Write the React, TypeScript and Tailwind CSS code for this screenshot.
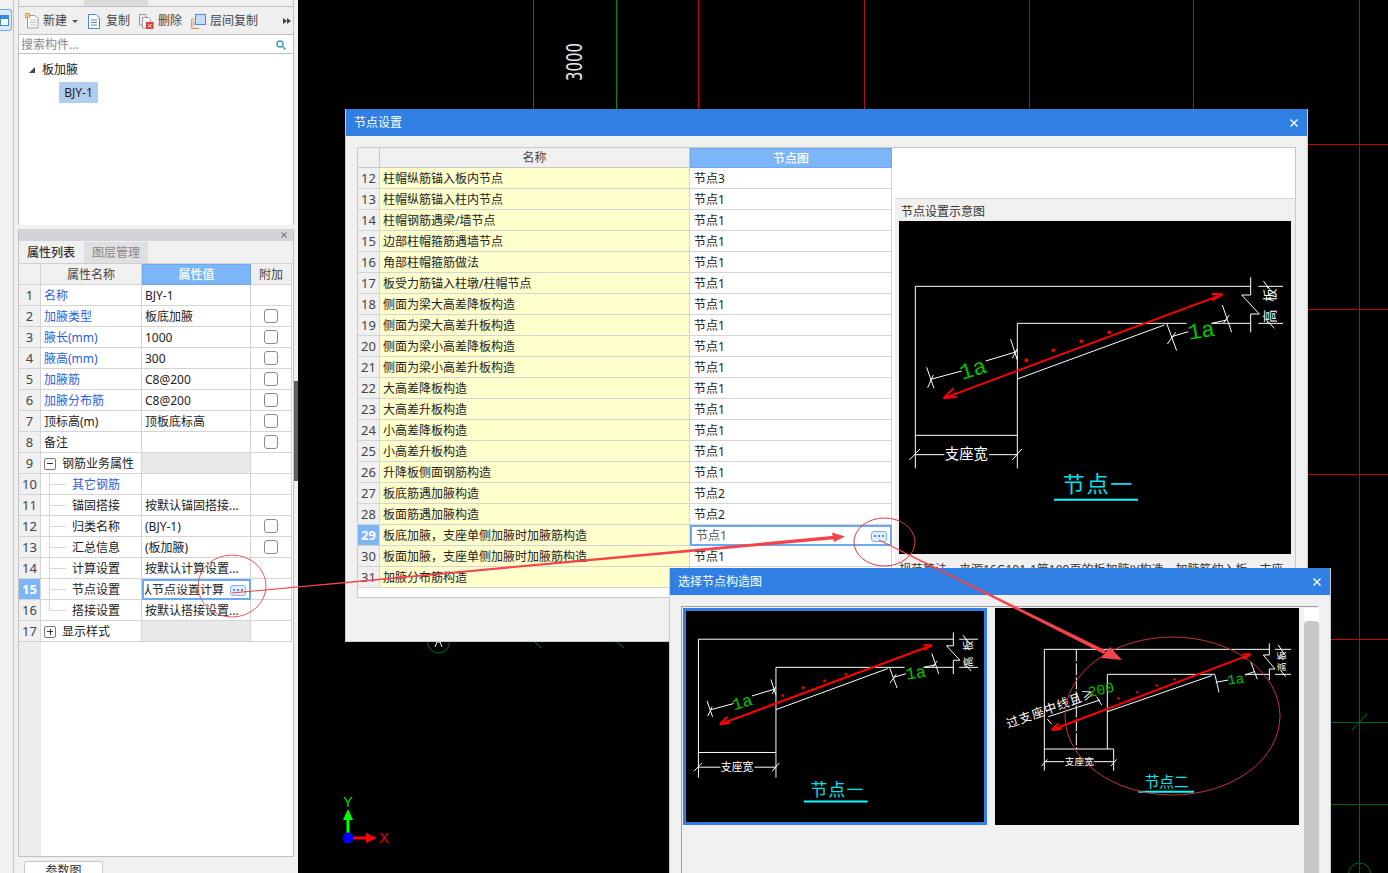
import React from "react";

const props: [string, string, boolean, boolean][] = [
  ["名称", "BJY-1", true, false],
  ["加腋类型", "板底加腋", true, true],
  ["腋长(mm)", "1000", true, true],
  ["腋高(mm)", "300", true, true],
  ["加腋筋", "C8@200", true, true],
  ["加腋分布筋", "C8@200", true, true],
  ["顶标高(m)", "顶板底标高", false, true],
  ["备注", "", false, true],
];
const subProps: [number, string, string, boolean, boolean][] = [
  [10, "其它钢筋", "", true, false],
  [11, "锚固搭接", "按默认锚固搭接...", false, false],
  [12, "归类名称", "(BJY-1)", false, true],
  [13, "汇总信息", "(板加腋)", false, true],
  [14, "计算设置", "按默认计算设置...", false, false],
  [15, "节点设置", "", false, false],
  [16, "搭接设置", "按默认搭接设置...", false, false],
];
const nodes: [number, string, string][] = [
  [12, "柱帽纵筋锚入板内节点", "节点3"],
  [13, "柱帽纵筋锚入柱内节点", "节点1"],
  [14, "柱帽钢筋遇梁/墙节点", "节点1"],
  [15, "边部柱帽箍筋遇墙节点", "节点1"],
  [16, "角部柱帽箍筋做法", "节点1"],
  [17, "板受力筋锚入柱墩/柱帽节点", "节点1"],
  [18, "侧面为梁大高差降板构造", "节点1"],
  [19, "侧面为梁大高差升板构造", "节点1"],
  [20, "侧面为梁小高差降板构造", "节点1"],
  [21, "侧面为梁小高差升板构造", "节点1"],
  [22, "大高差降板构造", "节点1"],
  [23, "大高差升板构造", "节点1"],
  [24, "小高差降板构造", "节点1"],
  [25, "小高差升板构造", "节点1"],
  [26, "升降板侧面钢筋构造", "节点1"],
  [27, "板底筋遇加腋构造", "节点2"],
  [28, "板面筋遇加腋构造", "节点2"],
  [29, "板底加腋，支座单侧加腋时加腋筋构造", "节点1"],
  [30, "板面加腋，支座单侧加腋时加腋筋构造", "节点1"],
  [31, "加腋分布筋构造", ""],
];

function P({ d, c = "#fff", w = 1 }: { d: string; c?: string; w?: number }) {
  return <path d={d} fill="none" stroke={c} strokeWidth={w} vectorEffect="non-scaling-stroke" />;
}

function Node1({ viewBox }: { viewBox: string }) {
  const cjk = "'Noto Sans CJK SC',sans-serif";
  const mono = "'Liberation Mono',monospace";
  return (
    <svg viewBox={viewBox} className="block h-full w-full bg-black">
      <P d="M61 274H1067M61 274V820M61 721H367M367 385V820M367 385H875M950 385H1067" />
      <P d="M1067 247V300H1040L1093 357H1067V412M1090 274H1164M1090 385H1164" />
      <P d="M1118 274V280M1118 380V385M1105 258L1130 290M1110 370L1138 400" />
      <P d="M367 552L808 390" />
      <P d="M815 385L845 467M817 447L842 412M830 425L880 410M950 385L995 375M982 330L1010 412M985 385L1003 360" />
      <P d="M95 517L117 580M98 578L115 540M107 553L200 528M272 498L365 470M347 433L367 495M352 490L366 462" />
      <P d="M61 779H148M282 779H367M43 795L75 762M352 795L380 762" />
      <text x="214" y="793" textAnchor="middle" fontSize="43" fill="#fff" fontFamily={cjk}>支座宽</text>
      <text x="0" y="0" textAnchor="middle" fontSize="40" fill="#fff" fontFamily={cjk} transform="translate(1139 300) rotate(-90)">板</text>
      <text x="0" y="0" textAnchor="middle" fontSize="40" fill="#fff" fontFamily={cjk} transform="translate(1139 363) rotate(-90)">高</text>
      <P d="M145 610L983 298M145 610L175 580M145 610L185 605M983 298L950 297M983 298L950 316" c="#f00" w={2} />
      {[[394, 496], [475, 466], [559, 439], [643, 412]].map(([x, y]) => (
        <path key={x} d={`M${x - 7} ${y}L${x} ${y - 7}L${x + 7} ${y}L${x} ${y + 7}Z`} fill="#f00" />
      ))}
      <text x="0" y="0" textAnchor="middle" fontSize="68" fill="#00c000" fontFamily={mono} transform="translate(240 543) rotate(-17)">1a</text>
      <text x="0" y="0" textAnchor="middle" fontSize="68" fill="#00c000" fontFamily={mono} transform="translate(922 428) rotate(-9)">1a</text>
      <text x="610" y="892" textAnchor="middle" fontSize="66" letterSpacing="5" fill="#00e0f0" fontFamily={cjk}>节点一</text>
      <P d="M477 914H729" c="#00ffff" w={2} />
    </svg>
  );
}

function Node2() {
  const cjk = "'Noto Sans CJK SC',sans-serif";
  const mono = "'Liberation Mono',monospace";
  return (
    <svg viewBox="30 129 912 651" className="block h-full w-full bg-black">
      <P d="M178 253H853M178 253V617M178 552H386M367 328V552M367 328H690M780 328H853M386 552V617" />
      <path d="M274 253V552" fill="none" stroke="#fff" strokeWidth={1} strokeDasharray="12 2" vectorEffect="non-scaling-stroke" />
      <P d="M853 235V270H835L870 312H853V345M870 253H918M870 328H918M880 240L898 268M886 315L902 335" />
      <P d="M367 440L680 332" />
      <P d="M190 455L345 405M187 462L200 478M335 395L350 420" />
      <P d="M690 330L702 382M692 352L730 345M780 330L808 320M797 290L817 343" />
      <P d="M178 590H238M326 590H386M170 603L187 583M378 603L395 583" />
      <text x="283" y="600" textAnchor="middle" fontSize="29" fill="#fff" fontFamily={cjk}>支座宽</text>
      <text x="0" y="0" textAnchor="middle" fontSize="27" fill="#fff" fontFamily={cjk} transform="translate(900 272) rotate(-90)">板</text>
      <text x="0" y="0" textAnchor="middle" fontSize="27" fill="#fff" fontFamily={cjk} transform="translate(900 305) rotate(-90)">高</text>
      <P d="M200 495L797 268M200 495L220 475M200 495L228 492M797 268L772 268M797 268L775 282" c="#f00" w={2} />
      {[[400, 400], [457, 382], [514, 361], [568, 343]].map(([x, y]) => (
        <path key={x} d={`M${x - 4} ${y}H${x + 4}M${x} ${y - 4}V${y + 4}`} stroke="#f00" strokeWidth={1} vectorEffect="non-scaling-stroke" />
      ))}
      <text x="0" y="0" fontSize="37" letterSpacing="3" fill="#fff" fontFamily={cjk} transform="translate(70 490) rotate(-20)">过支座中线且≥</text>
      <text x="0" y="0" fontSize="44" fill="#00c000" fontFamily={mono} transform="translate(312 396) rotate(-12)">200</text>
      <text x="0" y="0" textAnchor="middle" fontSize="42" fill="#00c000" fontFamily={mono} transform="translate(754 356) rotate(-8)">1a</text>
      <text x="545" y="666" textAnchor="middle" fontSize="44" fill="#00e8f0" fontFamily={cjk}>节点二</text>
      <P d="M460 680H627" c="#00ffff" w={2} />
    </svg>
  );
}

function Dots() {
  return (
    <span className="flex h-[11px] w-[16px] items-center justify-center gap-[2px] rounded-[3px] border border-[#7fb0ea] bg-[#e3eefb]">
      <i className="h-[2px] w-[2px] bg-[#4f8fdc]" />
      <i className="h-[2px] w-[2px] bg-[#4f8fdc]" />
      <i className="h-[2px] w-[2px] bg-[#4f8fdc]" />
    </span>
  );
}

function Close({ size, color }: { size: number; color: string }) {
  return (
    <svg width={size} height={size} viewBox="0 0 8 8">
      <path d="M.5.5L7.5 7.5M7.5.5L.5 7.5" stroke={color} strokeWidth="1.4" />
    </svg>
  );
}

function Check({ on }: { on: boolean }) {
  return (
    <div className="flex w-[41px] shrink-0 items-center justify-center border-b border-r border-[#d4d4d4]">
      {on && <span className="h-[14px] w-[14px] rounded-[3px] border border-[#8a8a8a] bg-white" />}
    </div>
  );
}

function Num({ n, on }: { n: number; on?: boolean }) {
  return (
    <div className={`flex w-[22px] shrink-0 items-center justify-center border-b border-r border-[#d4d4d4] text-[13px] ${on ? "bg-[#7db6f8] font-bold text-white" : "bg-[#f0f0f0] text-[#444]"}`}>
      {n}
    </div>
  );
}

function Box({ minus }: { minus: boolean }) {
  return (
    <span className="relative mr-[6px] h-[12px] w-[12px] shrink-0 rounded-[2px] border border-[#777] bg-white">
      <i className="absolute left-[2px] top-[4.5px] h-px w-[6px] bg-[#333]" />
      {!minus && <i className="absolute left-[4.5px] top-[2px] h-[6px] w-px bg-[#333]" />}
    </span>
  );
}

function LeftPanel() {
  return (
    <div className="flex h-full w-[276px] shrink-0 flex-col">
      <div className="flex h-[225px] flex-col border-x border-[#c0c0c0]">
        <div className="flex h-[7px] items-end overflow-hidden border-b border-[#c0c0c0] bg-[#f0f0f0]">
          <div className="flex h-[22px] w-[64px] shrink-0 items-center justify-center text-[#333]">构件列表</div>
          <div className="ml-px flex h-[22px] w-[64px] shrink-0 items-center justify-center bg-[#dcdcdc] text-[#888]">图层管理</div>
        </div>
        <div className="flex h-[28px] items-center border-b border-[#c0c0c0] bg-[#efefef] pl-[6px] pt-px text-[#444]">
          <svg width="14" height="16" viewBox="0 0 14 16" className="mr-[4px] shrink-0">
            <path d="M2.5 2.5H10L13 5.5V15H2.5Z" fill="#fff" stroke="#999" />
            <path d="M5 7H11M5 9.5H11M5 12H11" stroke="#bbb" />
            <rect x="0" y="0" width="5" height="5" fill="#f49a1f" />
            <path d="M1 1L4 4M4 1L1 4" stroke="#fff" />
          </svg>
          <span>新建</span>
          <i className="ml-[5px] mr-[10px] h-0 w-0 border-x-[3px] border-t-[3px] border-x-transparent border-t-[#555]" />
          <svg width="12" height="15" viewBox="0 0 12 15" className="mr-[6px] shrink-0">
            <path d="M.5.5H8L11.5 4V14.5H.5Z" fill="#fff" stroke="#4a86c8" />
            <path d="M3 6H9M3 8.5H9M3 11H9" stroke="#4a86c8" />
          </svg>
          <span>复制</span>
          <svg width="15" height="15" viewBox="0 0 15 15" className="ml-[9px] mr-[4px] shrink-0">
            <path d="M.5.5H7V3M.5.5V11H3" fill="none" stroke="#999" />
            <path d="M3.5 3.5H9.5L11.5 5.5V8M3.5 3.5V14H7" fill="#fff" stroke="#999" />
            <rect x="7" y="8" width="7.5" height="7" fill="#e03a3a" />
            <path d="M9 10L12.5 13.5M12.5 10L9 13.5" stroke="#fff" />
          </svg>
          <span>删除</span>
          <svg width="15" height="15" viewBox="0 0 15 15" className="ml-[9px] mr-[4px] shrink-0">
            <path d="M.7 14.5V5H3M.7 14.5H8" fill="none" stroke="#e2873a" />
            <path d="M2.7 12.5V7" fill="none" stroke="#e2873a" />
            <rect x="4.5" y=".5" width="10" height="10" fill="#c6dcf6" stroke="#4a8ad8" />
          </svg>
          <span>层间复制</span>
          <span className="ml-[25px] flex">
            <i className="h-0 w-0 border-y-[3px] border-l-[4px] border-y-transparent border-l-[#444]" />
            <i className="h-0 w-0 border-y-[3px] border-l-[4px] border-y-transparent border-l-[#444]" />
          </span>
        </div>
        <div className="flex h-[19px] items-center justify-between border-b border-[#c0c0c0] bg-white pl-[2px] pr-[7px] pt-px text-[#888]">
          <span>搜索构件...</span>
          <svg width="10" height="10" viewBox="0 0 10 10">
            <circle cx="4" cy="4" r="3" fill="none" stroke="#4a9ad0" strokeWidth="1.5" />
            <path d="M6 6L9.5 9.5" stroke="#4a9ad0" strokeWidth="1.5" />
          </svg>
        </div>
        <div className="flex flex-1 flex-col bg-white">
          <div className="mt-[5px] flex h-[20px] items-center pl-[10px] pt-px text-[#222]">
            <i className="mr-[7px] h-0 w-0 border-b-[6px] border-l-[6px] border-b-[#444] border-l-transparent" />
            板加腋
          </div>
          <div className="ml-[40px] mt-[3px] flex h-[21px] w-[39px] items-center justify-center bg-[#b3cdef] text-[#222]">BJY-1</div>
        </div>
      </div>

      <div className="mt-[4px] flex flex-1 flex-col border-x border-b border-[#c0c0c0]">
        <div className="flex h-[12px] items-center justify-end bg-[#d3d4d9] pr-[6px]">
          <Close size={6} color="#777" />
        </div>
        <div className="flex h-[23px] border-b border-[#cfcfcf] bg-[#f0f0f0] pt-px">
          <div className="flex w-[64px] items-center justify-center font-medium text-[#333]">属性列表</div>
          <div className="ml-px flex w-[64px] items-center justify-center bg-[#dfdfdf] text-[#888]">图层管理</div>
        </div>
        <div className="flex flex-1 flex-col bg-white">
          <div className="flex h-[21px] text-[#444]">
            <div className="w-[22px] shrink-0 border-b border-r border-[#d4d4d4] bg-[#f0f0f0]" />
            <div className="flex w-[101px] shrink-0 items-center justify-center border-b border-r border-[#d4d4d4] bg-[#f0f0f0] pt-px">属性名称</div>
            <div className="flex w-[109px] shrink-0 items-center justify-center border border-[#6fa8ec] bg-[#7db6f8] pt-px font-medium text-white">属性值</div>
            <div className="flex w-[41px] shrink-0 items-center justify-center border-b border-r border-[#d4d4d4] bg-[#f0f0f0] pt-px">附加</div>
          </div>
          {props.map(([name, value, blue, check], i) => (
            <div key={i} className="flex h-[21px] bg-white text-[#222]">
              <Num n={i + 1} />
              <div className={`flex w-[101px] shrink-0 items-center border-b border-r border-[#d4d4d4] pl-[3px] pt-px ${blue ? "text-[#2a5fe0]" : ""}`}>{name}</div>
              <div className="flex w-[109px] shrink-0 items-center border-b border-r border-[#d4d4d4] pl-[3px] pt-px">{value}</div>
              <Check on={check} />
            </div>
          ))}
          <div className="flex h-[21px] bg-white text-[#222]">
            <Num n={9} />
            <div className="flex w-[101px] shrink-0 items-center border-b border-r border-[#d4d4d4] pl-[3px] pt-px"><Box minus />钢筋业务属性</div>
            <div className="w-[109px] shrink-0 border-b border-r border-[#d4d4d4] bg-[#e9e9e9]" />
            <Check on={false} />
          </div>
          {subProps.map(([n, name, value, blue, check]) => (
            <div key={n} className="flex h-[21px] bg-white text-[#222]">
              <Num n={n} on={n === 15} />
              <div className={`relative flex w-[101px] shrink-0 items-center border-b border-r border-[#d4d4d4] pl-[31px] pt-px ${blue ? "text-[#2a5fe0]" : ""}`}>
                <i className={`absolute left-[8px] top-0 w-px bg-[#d8d8d8] ${n === 16 ? "h-[10px]" : "h-[21px]"}`} />
                <i className="absolute left-[8px] top-[10px] h-px w-[17px] bg-[#d8d8d8]" />
                {name}
              </div>
              {n === 15 ? (
                <div className="flex w-[109px] shrink-0 items-center border-2 border-[#6caaf0] pl-px pr-[3px] pt-px">
                  <div className="flex min-w-0 flex-1 justify-end overflow-hidden">
                    <span className="mr-[6px] shrink-0 whitespace-nowrap">按默认节点设置计算</span>
                  </div>
                  <span className="shrink-0"><Dots /></span>
                </div>
              ) : (
                <div className="flex w-[109px] shrink-0 items-center border-b border-r border-[#d4d4d4] pl-[3px] pt-px">{value}</div>
              )}
              <Check on={check} />
            </div>
          ))}
          <div className="flex h-[21px] bg-white text-[#222]">
            <Num n={17} />
            <div className="flex w-[101px] shrink-0 items-center border-b border-r border-[#d4d4d4] pl-[3px] pt-px"><Box minus={false} />显示样式</div>
            <div className="w-[109px] shrink-0 border-b border-r border-[#d4d4d4] bg-[#e9e9e9]" />
            <Check on={false} />
          </div>
          <div className="w-[22px] flex-1 bg-[#eeeeee]" />
        </div>
      </div>
      <div className="flex h-[16px] shrink-0 items-end pl-[6px]">
        <div className="flex h-[12px] w-[79px] items-start justify-center overflow-hidden rounded-t-[3px] border-x border-t border-[#c8c8c8] bg-white pt-px leading-[16px] text-[#333]">参数图</div>
      </div>
    </div>
  );
}

function Canvas() {
  const reds = [698, 864, 1029, 1193, 1359];
  return (
    <svg viewBox="298 0 1090 873" className="block h-[873px] w-[1090px] shrink-0">
      <path d="M533.5 0V110" stroke="#008000" />
      <path d="M616.5 0V110" stroke="#009000" />
      {reds.map((x) => (
        <path key={x} d={`M${x + 0.5} 0V${x === 1359 ? 639 : 110}`} stroke={x === 864 ? "#a01818" : "#d00000"} />
      ))}
      <path d="M1359.5 639V873" stroke="#006800" />
      <path d="M1308 144.5H1388M1308 309.5H1388M1308 474.5H1388" stroke="#c80000" />
      <path d="M1331 639.5H1388" stroke="#d80000" />
      <path d="M1331 722.5H1388M1331 804.5H1388" stroke="#006800" />
      <path d="M1352 730L1367 714" stroke="#008000" />
      <circle cx="1359.5" cy="874" r="11" fill="none" stroke="#007000" />
      <circle cx="438.5" cy="642" r="11" fill="none" stroke="#007000" />
      <path d="M535 642L541 648M617 642L624 648" stroke="#007000" />
      <path d="M435 647L437 642H440L442 647" fill="none" stroke="#fff" />
      <text x="0" y="0" textAnchor="middle" fontSize="21" fill="#e8e8e8" fontFamily="'DejaVu Sans',sans-serif" textLength="38" lengthAdjust="spacingAndGlyphs" transform="translate(582 62) rotate(-90)">3000</text>
      <rect x="346.5" y="820" width="3" height="18" fill="#00ff00" />
      <path d="M348 809L353 820H343Z" fill="#00ff00" />
      <text x="348" y="807" textAnchor="middle" fontSize="14" fill="#00e000" fontFamily="'Liberation Sans',sans-serif">Y</text>
      <rect x="350" y="836.5" width="17" height="3" fill="#ff0000" />
      <path d="M377 838L366 833V843Z" fill="#ff0000" />
      <text x="384" y="843" textAnchor="middle" fontSize="15" fill="#f00000" fontFamily="'Liberation Sans',sans-serif">X</text>
      <circle cx="348" cy="838" r="5.5" fill="#0000ff" />
    </svg>
  );
}

function Dialog1() {
  return (
    <div className="absolute left-[345px] top-[109px] flex h-[533px] w-[963px] flex-col border-x border-b border-[#c4cad6] bg-[#f0f0f0]">
      <div className="flex h-[27px] shrink-0 items-center justify-between bg-[#2f80e2] pl-[8px] pr-[9px] text-white">
        <span>节点设置</span>
        <Close size={8} color="#fff" />
      </div>
      <div className="ml-[11px] mt-[11px] flex h-[451px] w-[939px] overflow-hidden border border-[#c8c8c8] bg-white">
        <div className="flex w-[534px] shrink-0 flex-col">
          <div className="flex h-[20px] text-[#444]">
            <div className="w-[22px] shrink-0 border-b border-r border-[#c8c8c8] bg-[#f0f0f0]" />
            <div className="flex w-[310px] shrink-0 items-center justify-center border-b border-r border-[#c8c8c8] bg-[#f0f0f0] pt-px">名称</div>
            <div className="flex w-[202px] shrink-0 items-center justify-center border border-[#6fa8ec] bg-[#7db6f8] pt-px font-medium text-white">节点图</div>
          </div>
          {nodes.map(([n, name, v]) => (
            <div key={n} className="flex h-[21px] text-[#222]">
              <Num n={n} on={n === 29} />
              <div className="flex w-[310px] shrink-0 items-center border-b border-r border-[#d4d4d4] bg-[#ffffcc] pl-[3px] pt-px">{name}</div>
              {n === 29 ? (
                <div className="flex w-[202px] shrink-0 items-center justify-between border-2 border-[#6caaf0] pl-[4px] pr-[3px] pt-px text-[#555]">
                  {v}
                  <Dots />
                </div>
              ) : (
                <div className="flex w-[202px] shrink-0 items-center border-b border-r border-[#d4d4d4] pl-[4px] pt-px">{v}</div>
              )}
            </div>
          ))}
        </div>
        <div className="ml-[3px] mt-[50px] flex h-[400px] w-[400px] shrink-0 flex-col border-t border-[#d8d8d8] bg-[#f0f0f0] px-[4px]">
          <div className="flex h-[22px] shrink-0 items-center pl-[2px] pt-[4px] text-[#333]">节点设置示意图</div>
          <div className="h-[333px] w-[392px] shrink-0">
            <Node1 viewBox="12 78 1176 999" />
          </div>
          <div className="mt-[10px] whitespace-nowrap text-[#333]">规范算法，来源16G101-1第109页的板加腋JY构造，加腋筋伸入板，支座</div>
        </div>
      </div>
    </div>
  );
}

function Dialog2() {
  return (
    <div className="absolute left-[669px] top-[568px] flex h-[305px] w-[662px] flex-col border-x border-[#c4cad6] bg-[#f0f0f0]">
      <div className="flex h-[27px] shrink-0 items-center justify-between bg-[#2f80e2] pl-[8px] pr-[9px] text-white">
        <span>选择节点构造图</span>
        <Close size={8} color="#fff" />
      </div>
      <div className="ml-[11px] mt-[11px] flex w-[637px] flex-1 border-l border-t border-[#a0a0a0] pl-px pt-px">
        <div className="h-[217px] w-[304px] shrink-0 border-[3px] border-[#2f80e2]">
          <Node1 viewBox="12 163 1176 832" />
        </div>
        <div className="ml-[8px] h-[217px] w-[304px] shrink-0">
          <Node2 />
        </div>
        <div className="ml-[5px] flex w-[15px] shrink-0 justify-center bg-white pt-[13px]">
          <div className="w-[8px] flex-1 rounded-t-[4px] bg-[#c8c8c8]" />
        </div>
      </div>
    </div>
  );
}

function Overlay() {
  return (
    <svg viewBox="0 0 1388 873" className="pointer-events-none absolute inset-0 h-[873px] w-[1388px]">
      <ellipse cx="232" cy="586" rx="34" ry="31" fill="none" stroke="#ee5560" />
      <ellipse cx="884.5" cy="542" rx="30.5" ry="24" fill="none" stroke="#d83c46" />
      <ellipse cx="1172.5" cy="716" rx="107.5" ry="79" fill="none" stroke="#c8343c" />
      <path d="M232 592.5V593.5L834 539.2V535.8Z" fill="#f4434b" />
      <path d="M845 536.5L832 532.5L834 542Z" fill="#f4434b" />
      <path d="M879 539.5V540.5L1104 654L1106 650.5Z" fill="#f4434b" />
      <path d="M1122 660L1101 658L1110 647Z" fill="#f4434b" />
    </svg>
  );
}

export default function App() {
  return (
    <div className="relative flex h-[873px] w-[1388px] overflow-hidden bg-black font-['Noto_Sans','Noto_Sans_CJK_SC',sans-serif] text-[12px] leading-none">
      <div className="flex h-full w-[14px] shrink-0 border-r border-[#c4c4c4] bg-[#f0f0f0] pt-[9px]">
        <div className="flex h-[22px] w-[12px] items-center justify-end rounded-r-[3px] border border-l-0 border-[#6aaef2] bg-[#dcebfb] pr-[2px]">
          <span className="flex h-[11px] w-[9px] flex-col border border-[#3a88d8] bg-white">
            <i className="h-[3px] bg-[#3a88d8]" />
          </span>
        </div>
      </div>
      <div className="flex h-full w-[284px] shrink-0 bg-[#f0f0f0] pl-[4px]">
        <LeftPanel />
        <div className="w-[4px] shrink-0 pt-[381px]">
          <div className="h-[100px] bg-[#5c6168]" />
        </div>
      </div>
      <Canvas />
      <Dialog1 />
      <Dialog2 />
      <Overlay />
    </div>
  );
}
